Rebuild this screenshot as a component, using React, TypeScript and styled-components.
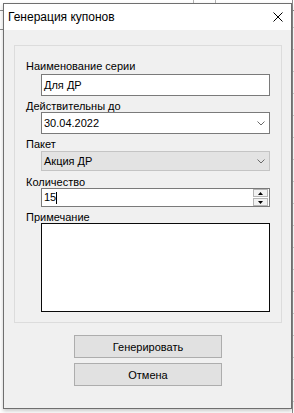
import React from "react";
import styled, { createGlobalStyle } from "styled-components";

const GlobalStyle = createGlobalStyle`
  html, body {
    margin: 0;
    padding: 0;
  }
  body {
    width: 294px;
    height: 413px;
    overflow: hidden;
    font-family: "Liberation Sans", Arial, sans-serif;
    background-color: #ffffff;
    background-image:
      linear-gradient(#8c8c8c, #8c8c8c),
      linear-gradient(#b4b4b4, #b4b4b4),
      linear-gradient(#b4b4b4, #b4b4b4),
      linear-gradient(#8c8c8c, #8c8c8c),
      linear-gradient(#8c8c8c, #8c8c8c),
      repeating-linear-gradient(180deg, transparent 0 21px, #d0d0d0 21px 22px);
    background-size: 294px 1px, 1px 3px, 1px 3px, 1px 413px, 3px 1px, 3px 413px;
    background-position: 0 10px, 193px 0, 215px 0, 292px 0, 0 29px, 291px 6px;
    background-repeat: no-repeat;
  }
`;

const Screen = styled.div`
  padding: 3px 0 0 3px;
`;

const Window = styled.div`
  box-sizing: border-box;
  width: 289px;
  height: 406px;
  border: 1px solid #6f6f6f;
  background: #f0f0f0;
  box-shadow: 0 2px 4px rgba(0, 0, 0, 0.22);
  display: flex;
  flex-direction: column;
`;

const TitleBar = styled.div`
  height: 26px;
  background: #ffffff;
  display: flex;
  align-items: center;
  justify-content: space-between;
  padding: 0 8px 0 4px;
`;

const Title = styled.span`
  font-size: 12px;
  color: #000;
  line-height: 26px;
`;

const CloseIcon = styled.svg`
  display: block;
  width: 10px;
  height: 10px;
  margin-top: -1px;
`;

const Body = styled.div`
  flex: 1;
  padding: 15px 9px 0 10px;
  display: flex;
  flex-direction: column;
`;

const GroupBox = styled.div`
  box-sizing: border-box;
  height: 278px;
  border: 1px solid #dcdcdc;
  padding: 14px 11px 0 0;
  display: flex;
  flex-direction: column;
`;

const Field = styled.div<{ $top: number }>`
  display: flex;
  flex-direction: column;
  margin-top: ${(p) => p.$top}px;
`;

const Label = styled.div<{ $gap: number }>`
  font-size: 11px;
  line-height: 12px;
  height: 12px;
  color: #000;
  padding-left: 11px;
  margin-bottom: ${(p) => p.$gap}px;
  white-space: nowrap;
`;

const Control = styled.div<{ $h: number; $disabled?: boolean; $dark?: boolean }>`
  box-sizing: border-box;
  margin-left: 26px;
  height: ${(p) => p.$h}px;
  border: 1px solid
    ${(p) => (p.$dark ? "#0a0a0a" : p.$disabled ? "#c4c4c4" : "#7a7a7a")};
  background: ${(p) => (p.$disabled ? "#e3e3e3" : "#ffffff")};
  display: flex;
  align-items: center;
  font-size: 11px;
  color: #000;
  padding-left: 2px;
`;

const Value = styled.span`
  flex: 1;
  white-space: nowrap;
  line-height: 13px;
  display: flex;
  align-items: center;
`;

const Caret = styled.span`
  display: inline-block;
  width: 1px;
  height: 12px;
  background: #000;
  margin-left: 0;
`;

const Chevron = styled.svg`
  display: block;
  width: 8px;
  height: 5px;
  margin-right: 4px;
`;

const Spin = styled.div`
  display: flex;
  flex-direction: column;
  gap: 1px;
  align-self: stretch;
  padding: 0 1px 0 0;
`;

const SpinButton = styled.div<{ $h: number }>`
  box-sizing: border-box;
  width: 15px;
  height: ${(p) => p.$h}px;
  border: 1px solid #b5b5b5;
  background: #f2f2f2;
  display: flex;
  align-items: center;
  justify-content: center;
`;

const Triangle = styled.svg`
  display: block;
  width: 5px;
  height: 3px;
`;

const Buttons = styled.div`
  display: flex;
  flex-direction: column;
  align-items: center;
  gap: 5px;
  margin-top: 12px;
`;

const Button = styled.div`
  box-sizing: border-box;
  width: 148px;
  height: 23px;
  border: 1px solid #adadad;
  background: #e1e1e1;
  font-size: 11px;
  color: #000;
  display: flex;
  align-items: center;
  justify-content: center;
`;

const ChevronDown = () => (
  <Chevron viewBox="0 0 8 5">
    <polyline points="0.5,0.5 4,4 7.5,0.5" fill="none" stroke="#6a6a6a" strokeWidth="1" />
  </Chevron>
);

export default function App() {
  return (
    <>
      <GlobalStyle />
      <Screen>
        <Window>
          <TitleBar>
            <Title>Генерация купонов</Title>
            <CloseIcon viewBox="0 0 10 10">
              <path d="M0.5 0.5 L9.5 9.5 M9.5 0.5 L0.5 9.5" stroke="#000" strokeWidth="1" fill="none" />
            </CloseIcon>
          </TitleBar>
          <Body>
            <GroupBox>
              <Field $top={0}>
                <Label $gap={2}>Наименование серии</Label>
                <Control $h={22}>
                  <Value>Для ДР</Value>
                </Control>
              </Field>
              <Field $top={4}>
                <Label $gap={0}>Действительны до</Label>
                <Control $h={22}>
                  <Value>30.04.2022</Value>
                  <ChevronDown />
                </Control>
              </Field>
              <Field $top={4}>
                <Label $gap={1}>Пакет</Label>
                <Control $h={20} $disabled>
                  <Value>Акция ДР</Value>
                  <ChevronDown />
                </Control>
              </Field>
              <Field $top={5}>
                <Label $gap={0}>Количество</Label>
                <Control $h={19}>
                  <Value>
                    15
                    <Caret />
                  </Value>
                  <Spin>
                    <SpinButton $h={9}>
                      <Triangle viewBox="0 0 5 3">
                        <polygon points="2.5,0 5,3 0,3" fill="#000" />
                      </Triangle>
                    </SpinButton>
                    <SpinButton $h={8}>
                      <Triangle viewBox="0 0 5 3">
                        <polygon points="0,0 5,0 2.5,3" fill="#000" />
                      </Triangle>
                    </SpinButton>
                  </Spin>
                </Control>
              </Field>
              <Field $top={4}>
                <Label $gap={0}>Примечание</Label>
                <Control $h={89} $dark />
              </Field>
            </GroupBox>
            <Buttons>
              <Button>Генерировать</Button>
              <Button>Отмена</Button>
            </Buttons>
          </Body>
        </Window>
      </Screen>
    </>
  );
}
